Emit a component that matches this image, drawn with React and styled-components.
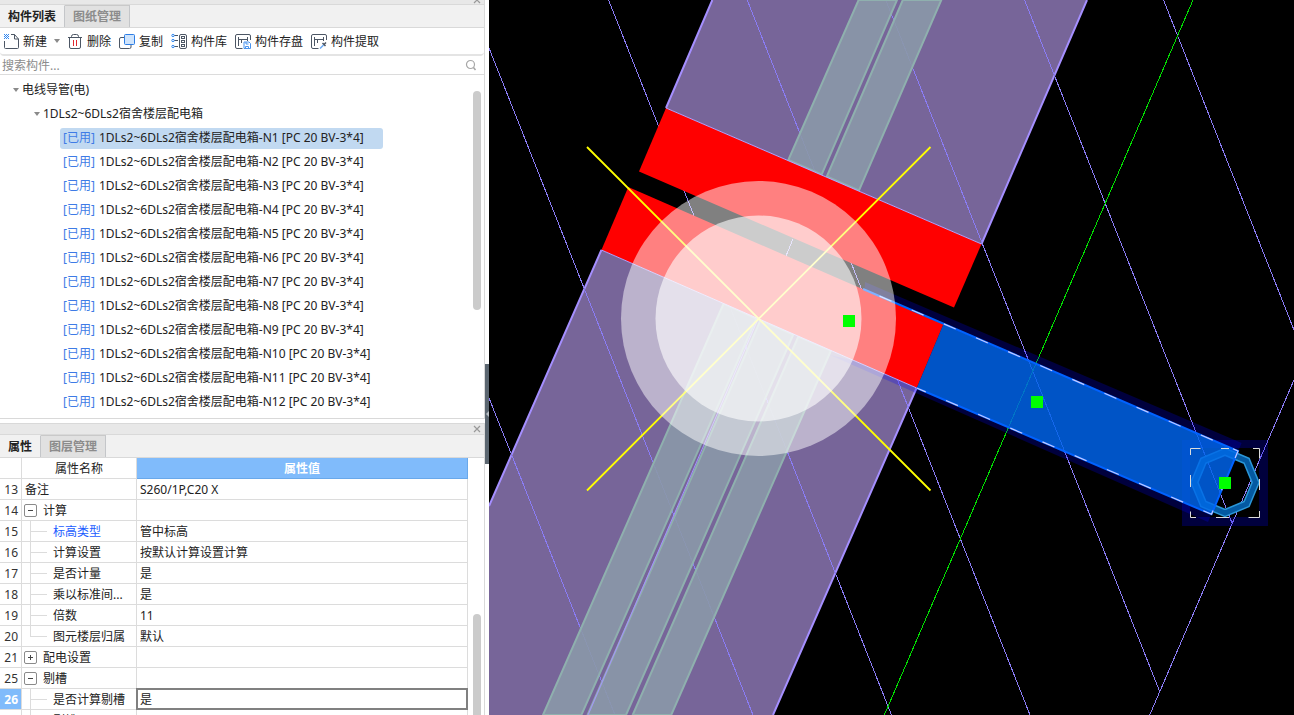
import React, { useState } from 'react';
import styled, { createGlobalStyle } from 'styled-components';

const GlobalStyle = createGlobalStyle`
  * {
    box-sizing: border-box;
  }

  body {
    margin: 0;
    overflow: hidden;
    background: #fff;
    color: #222;
    font-family: 'Noto Sans', 'Noto Sans CJK SC', sans-serif;
    font-size: 12px;
    line-height: 20px;
  }

  button,
  input {
    margin: 0;
    padding: 0;
    border: none;
    background: none;
    color: inherit;
    font: inherit;
  }
`;

const Workspace = styled.div`
  display: flex;
  height: 100vh;
`;

const Sidebar = styled.aside`
  display: flex;
  flex-direction: column;
  flex: 0 0 485px;
  min-width: 0;
  overflow: hidden;
`;

const Splitter = styled.div`
  flex: 0 0 4px;
  background: #fff;
`;

const CollapseButton = styled.button`
  display: flex;
  justify-content: flex-end;
  align-items: center;
  width: 4px;
  height: 100px;
  margin-top: 364px;
  background: #5b6670;
`;

const Panel = styled.section`
  display: flex;
  flex-direction: column;
  flex: ${(p) => (p.$grow ? '1' : 'none')};
  min-height: 0;
  margin-bottom: ${(p) => (p.$grow ? '0' : '4px')};
  border-right: 1px solid #d9d9d9;
  border-bottom: ${(p) => (p.$grow ? 'none' : '1px solid #d9d9d9')};
`;

const TitleBar = styled.div`
  display: flex;
  flex: none;
  justify-content: flex-end;
  align-items: ${(p) => (p.$clipped ? 'flex-end' : 'center')};
  height: ${(p) => (p.$clipped ? '5px' : '12px')};
  padding-right: 3px;
  overflow: hidden;
  border-top: ${(p) => (p.$clipped ? 'none' : '1px solid #d9d9d9')};
  border-bottom: 1px solid #d9d9d9;
  background: #e8e8e8;
`;

const CloseButton = styled.button`
  display: flex;
  width: 8px;
  height: 8px;
`;

const Tabs = styled.div`
  display: flex;
  flex: none;
  height: 23px;
  border-bottom: 1px solid #d9d9d9;
  background: #f1f1f1;
`;

const Tab = styled.button`
  height: 22px;
  padding: 0 8px;
  border-right: 1px solid #c4c6c9;
  border-top: 1px solid ${(p) => (p.$active ? '#f1f1f1' : '#c9c9c9')};
  background: ${(p) => (p.$active ? '#f1f1f1' : '#e1e1e1')};
  color: ${(p) => (p.$active ? '#222' : '#8c8c8c')};
  font-weight: 700;
`;

const Toolbar = styled.div`
  display: flex;
  flex: none;
  align-items: center;
  gap: 8px;
  height: 28px;
  padding-left: 3px;
  border-bottom: 2px solid #e4e4e4;
  border-radius: 0 0 4px 4px;
`;

const ToolGroup = styled.div`
  display: flex;
`;

const ToolButton = styled.button`
  display: flex;
  align-items: center;
  gap: 4px;
`;

const ToolLabel = styled.span`
  padding-top: 2px;
`;

const MenuButton = styled.button`
  display: flex;
  justify-content: flex-end;
  align-items: center;
  width: 13px;
  margin-right: -1px;
`;

const SearchBar = styled.label`
  display: flex;
  flex: none;
  align-items: center;
  height: 19px;
  padding: 0 7px 0 2px;
  border-bottom: 1px solid #dcdcdc;
`;

const SearchInput = styled.input`
  flex: 1;
  padding-top: 2px;
  outline: none;

  &::placeholder {
    color: #8c8c8c;
    opacity: 1;
  }
`;

const Scroller = styled.div`
  display: flex;
  flex: ${(p) => (p.$grow ? '1' : 'none')};
  min-height: 0;
`;

const ScrollTrack = styled.div`
  flex: none;
  width: 11px;
  padding-top: ${(p) => p.$offset}px;
`;

const ScrollThumb = styled.div`
  width: 8px;
  height: ${(p) => p.$size}px;
  border-radius: 4px;
  background: #cbcbcb;
`;

const Tree = styled.ul`
  flex: 1;
  margin: 0;
  padding: 3px 0 4px;
  list-style: none;
`;

const TreeRow = styled.li`
  display: flex;
  align-items: center;
  gap: 3px;
  height: 24px;
  padding-left: ${(p) => p.$indent}px;
`;

const TreeItem = styled.button`
  display: flex;
  align-items: center;
  gap: 4px;
  height: 21px;
  padding: 0 19px 0 3px;
  border-radius: 3px;
  background: ${(p) => (p.$selected ? '#c1d9f1' : 'transparent')};
  white-space: pre;
`;

const UsedMark = styled.span`
  color: #3e7be6;
`;

const Table = styled.table`
  width: 468px;
  border-collapse: separate;
  border-spacing: 0;
  table-layout: fixed;

  col:nth-child(1) {
    width: 22px;
  }

  col:nth-child(2) {
    width: 115px;
  }

  tr {
    height: 21px;
  }
`;

const TableArea = styled.div`
  flex: 1;
  overflow: hidden;
`;

const HeadCell = styled.th`
  height: 21px;
  padding: 1px 0 0;
  line-height: 19px;
  border-right: 1px solid ${(p) => (p.$active ? '#69a8ea' : '#dcdcdc')};
  border-bottom: 1px solid ${(p) => (p.$active ? '#69a8ea' : '#dcdcdc')};
  background: ${(p) => (p.$active ? '#80bbfb' : '#fff')};
  color: ${(p) => (p.$active ? '#fff' : '#222')};
  font-weight: ${(p) => (p.$active ? 700 : 400)};
`;

const NumberCell = styled.th`
  height: 21px;
  padding: 1px 3px 0 0;
  line-height: 19px;
  border-right: 1px solid #dcdcdc;
  border-bottom: 1px solid #dcdcdc;
  background: ${(p) => (p.$active ? '#80bbfb' : '#fff')};
  color: ${(p) => (p.$active ? '#fff' : '#333')};
  font-weight: ${(p) => (p.$active ? 700 : 400)};
  text-align: right;
`;

const Cell = styled.td`
  height: 21px;
  padding: 0;
  border-right: 1px solid #dcdcdc;
  border-bottom: 1px solid #dcdcdc;
`;

const NameLine = styled.div`
  display: flex;
  align-items: center;
  gap: 6px;
  height: 20px;
  padding-left: ${(p) => p.$indent}px;
  color: ${(p) => (p.$link ? '#1a5cff' : 'inherit')};
  white-space: nowrap;
`;

const NameText = styled.span`
  padding-top: 2px;
`;

const Guide = styled.span`
  flex: none;
  width: 17px;
  height: 20px;

  &::before,
  &::after {
    content: '';
    display: block;
    height: 10px;
    border-left: 1px solid #dcdcdc;
  }

  &::before {
    border-bottom: 1px solid #dcdcdc;
  }

  &::after {
    border-left-color: ${(p) => (p.$last ? 'transparent' : '#dcdcdc')};
  }
`;

const Toggle = styled.button`
  display: flex;
  flex: none;
  justify-content: center;
  align-items: center;
  width: 13px;
  height: 13px;
  border: 1px solid #8a8a8a;
  border-radius: 2px;
`;

const ValueInput = styled.input`
  display: block;
  width: 100%;
  height: 20px;
  padding: 2px 3px 0;
  outline: ${(p) => (p.$active ? '2px solid #808080' : 'none')};
  outline-offset: -1px;
  text-overflow: ellipsis;
`;

const Viewport = styled.main`
  flex: 1;
  min-width: 0;
  background: #000;
`;

const Drawing = styled.svg`
  display: block;
  width: 100%;
  height: 100%;
`;

const Caret = () => (
  <svg width="6" height="4" viewBox="0 0 6 4" aria-hidden="true">
    <path d="M0 0h6L3 4z" fill="#8a8a8a" />
  </svg>
);

const CloseIcon = () => (
  <svg width="8" height="8" viewBox="0 0 8 8" aria-hidden="true">
    <path d="M1 1l6 6M7 1L1 7" stroke="#999" strokeWidth="1.2" />
  </svg>
);

const Icon = ({ children }) => (
  <svg
    width="16"
    height="16"
    viewBox="0 0 16 16"
    fill="none"
    stroke="#4c5664"
    aria-hidden="true"
  >
    {children}
  </svg>
);

const NewIcon = () => (
  <Icon>
    <path d="M1.5 8v6.500a1 1 0 0 0 1 1h12a1 1 0 0 0 1-1V6L11.500 1.500H8M11.500 1.500V6h4" />
    <path
      d="M1 1h1v1h1v1H2v1H1V3h1V2H1zM3 1h1v1H3zM5 1h1v1H5zM4 2h1v1H4zM3 3h1v1H3zM5 3h1v1H5zM2 4h1v1H2zM4 4h1v1H4zM1 5h1v1H1zM3 5h1v1H3zM5 5h1v1H5z"
      fill="#2f86f0"
      stroke="none"
    />
  </Icon>
);

const DeleteIcon = () => (
  <Icon>
    <path d="M1 4.500h14M4.500 4.500v-1a2 2 0 0 1 2-2h3a2 2 0 0 1 2 2v1M2.500 4.500V14A1.500 1.500 0 0 0 4 15.500h8a1.500 1.500 0 0 0 1.500-1.500V4.500" />
    <path d="M6.500 7v6M9.500 7v6" stroke="#e02830" />
  </Icon>
);

const CopyIcon = () => (
  <Icon>
    <path d="M5 4.500H2A1.500 1.500 0 0 0 .5 6v8A1.500 1.500 0 0 0 2 15.500h8.500A1.500 1.500 0 0 0 12 14v-2.500" />
    <rect x="5.500" y="1.500" width="10" height="10" rx="1" fill="#cfe4fc" stroke="#2d7de4" />
  </Icon>
);

const LibraryIcon = () => (
  <Icon>
    <path d="M3 2.500h4M3 7.500h4M3 13.500h4" />
    <g stroke="#2d86f0" fill="#fff">
      <circle cx="2" cy="2.500" r="1.200" />
      <circle cx="2" cy="7.500" r="1.200" />
      <circle cx="2" cy="13.500" r="1.200" />
    </g>
    <rect x="8.500" y="1.500" width="7" height="14" rx="1.500" />
    <rect x="10.500" y="3.500" width="3" height="2" />
    <rect x="10.500" y="7.500" width="3" height="2" />
    <rect x="10.500" y="11.500" width="3" height="2" />
  </Icon>
);

const FrameStrokes = () => (
  <path d="M7.500 15.500H2A1.500 1.500 0 0 1 .5 14V3A1.500 1.500 0 0 1 2 1.500h12A1.500 1.500 0 0 1 15.500 3v4M3.500 13V4M3.500 6.500h8.500M12.500 4v4M6.500 10V6.500" />
);

const StoreIcon = () => (
  <Icon>
    <FrameStrokes />
    <path d="M9 9h5l1.500 1.500v5H9z" fill="#fff" stroke="#4a94ee" />
    <path d="M11 9v2h2.500M10.500 15v-1.500h3V15" stroke="#4a94ee" />
  </Icon>
);

const ExtractIcon = () => (
  <Icon>
    <FrameStrokes />
    <path d="M9 15.500l3.500-3.500" stroke="#6aa9f4" strokeWidth="1.500" />
    <path d="M11.500 10l3 3M12.500 12l2.500-2.500" strokeWidth="1.500" />
  </Icon>
);

const SearchIcon = () => (
  <svg width="12" height="12" viewBox="0 0 12 12" fill="none" stroke="#a6a6a6" aria-hidden="true">
    <circle cx="5.500" cy="5.500" r="4" strokeWidth="1.200" />
    <path d="M8.500 8.500l2 2.500" strokeWidth="1.500" />
  </svg>
);

const tools = [
  { label: '新建', icon: NewIcon, menu: true },
  { label: '删除', icon: DeleteIcon },
  { label: '复制', icon: CopyIcon },
  { label: '构件库', icon: LibraryIcon },
  { label: '构件存盘', icon: StoreIcon },
  { label: '构件提取', icon: ExtractIcon },
];

const circuits = Array.from({ length: 12 }, (_, i) => `N${i + 1}`);

const properties = [
  { id: 13, name: '备注', value: 'S260/1P,C20 X' },
  { id: 14, name: '计算', group: true, open: true },
  { id: 15, name: '标高类型', value: '管中标高', child: true, link: true },
  { id: 16, name: '计算设置', value: '按默认计算设置计算', child: true },
  { id: 17, name: '是否计量', value: '是', child: true },
  { id: 18, name: '乘以标准间...', value: '是', child: true },
  { id: 19, name: '倍数', value: '11', child: true },
  { id: 20, name: '图元楼层归属', value: '默认', child: true, last: true },
  { id: 21, name: '配电设置', group: true },
  { id: 25, name: '剔槽', group: true, open: true },
  { id: 26, name: '是否计算剔槽', value: '是', child: true },
  { id: 27, name: '剔槽', value: '', child: true, last: true },
];

const ComponentPanel = () => {
  const [selected, setSelected] = useState('N1');

  return (
    <Panel>
      <TitleBar $clipped>
        <CloseButton aria-label="关闭">
          <CloseIcon />
        </CloseButton>
      </TitleBar>
      <Tabs>
        <Tab $active>构件列表</Tab>
        <Tab>图纸管理</Tab>
      </Tabs>
      <Toolbar>
        {tools.map(({ label, icon: ToolIcon, menu }) => (
          <ToolGroup key={label}>
            <ToolButton>
              <ToolIcon />
              <ToolLabel>{label}</ToolLabel>
            </ToolButton>
            {menu && (
              <MenuButton aria-label="更多">
                <Caret />
              </MenuButton>
            )}
          </ToolGroup>
        ))}
      </Toolbar>
      <SearchBar>
        <SearchInput placeholder="搜索构件..." aria-label="搜索构件" />
        <SearchIcon />
      </SearchBar>
      <Scroller>
        <Tree>
          <TreeRow $indent={13}>
            <Caret />
            电线导管(电)
          </TreeRow>
          <TreeRow $indent={34}>
            <Caret />
            1DLs2~6DLs2宿舍楼层配电箱
          </TreeRow>
          {circuits.map((name) => (
            <TreeRow key={name} $indent={60}>
              <TreeItem $selected={name === selected} onClick={() => setSelected(name)}>
                <UsedMark>[已用]</UsedMark>
                {`1DLs2~6DLs2宿舍楼层配电箱-${name} [PC 20 BV-3*4]`}
              </TreeItem>
            </TreeRow>
          ))}
        </Tree>
        <ScrollTrack $offset={16}>
          <ScrollThumb $size={219} />
        </ScrollTrack>
      </Scroller>
    </Panel>
  );
};

const PropertyPanel = () => {
  const [active, setActive] = useState(26);

  return (
    <Panel $grow>
      <TitleBar>
        <CloseButton aria-label="关闭">
          <CloseIcon />
        </CloseButton>
      </TitleBar>
      <Tabs>
        <Tab $active>属性</Tab>
        <Tab>图层管理</Tab>
      </Tabs>
      <Scroller $grow>
        <TableArea>
          <Table>
            <colgroup>
              <col />
              <col />
              <col />
            </colgroup>
            <thead>
              <tr>
                <HeadCell aria-label="序号" />
                <HeadCell scope="col">属性名称</HeadCell>
                <HeadCell scope="col" $active>
                  属性值
                </HeadCell>
              </tr>
            </thead>
            <tbody>
              {properties.map((p) => (
                <tr key={p.id}>
                  <NumberCell scope="row" $active={p.id === active}>
                    {p.id}
                  </NumberCell>
                  <Cell>
                    <NameLine $indent={p.child ? 8 : p.group ? 2 : 3} $link={p.link}>
                      {p.child && <Guide $last={p.last} />}
                      {p.group && (
                        <Toggle aria-label={p.name}>
                          <svg width="7" height="7" viewBox="0 0 7 7" stroke="#444">
                            <path d={p.open ? 'M1 3.5h5' : 'M1 3.5h5M3.5 1v5'} />
                          </svg>
                        </Toggle>
                      )}
                      <NameText>{p.name}</NameText>
                    </NameLine>
                  </Cell>
                  <Cell>
                    {!p.group && (
                      <ValueInput
                        defaultValue={p.value}
                        aria-label={p.name}
                        $active={p.id === active}
                        onFocus={() => setActive(p.id)}
                      />
                    )}
                  </Cell>
                </tr>
              ))}
            </tbody>
          </Table>
        </TableArea>
        <ScrollTrack $offset={156}>
          <ScrollThumb $size={110} />
        </ScrollTrack>
      </Scroller>
    </Panel>
  );
};

const gridLines = [
  [489, 398, 615, 715],
  [489, 48, 753, 715],
  [608.6, 0, 891.5, 715],
  [747.2, 0, 1030, 715],
  [885.8, 0, 1159.5, 691],
  [1024.5, 0, 1232, 523],
  [1163.5, 0, 1294, 330],
  [1294, 380, 1149.7, 715],
  [793, 239, 786, 256],
];

const ducts = [
  '858.6,0 897,0 821.7,174.5 788.3,160',
  '902.8,0 941.3,0 859,190.500 826.8,176.500',
  '543,715 723.6,303.500 756.500,318.500 581.4,715',
  '587.6,715 760.500,320 793.3,334.500 626,715',
  '632.7,715 798.3,336.500 831,350.500 671.2,715',
];

const handles = [
  [843, 315],
  [1031, 396],
  [1219, 477],
];

const riserPath = 'M1225 451.800l21.600 9 9 21.600-9 21.600-21.600 9-21.600-9-9-21.600 9-21.600z';

const PlanView = () => (
  <Viewport>
    <Drawing viewBox="489 0 805 715" preserveAspectRatio="xMinYMin slice" role="img" aria-label="平面图">
      <path d="M712.3 0H1087L981.5 244 666 108z" fill="#776599" />
      <path d="M601.4 250L916.6 388 773 715H489V506z" fill="#776599" />
      <g stroke="#a58fff" strokeWidth="2">
        <path d="M712.3 0L666 108M1087 0L981.5 244M601.4 250L489 506M916.6 388L773 715" />
      </g>
      <g stroke="#8a7cf4" shapeRendering="crispEdges">
        {gridLines.map(([x1, y1, x2, y2]) => (
          <line key={`${x1}-${y1}`} x1={x1} y1={y1} x2={x2} y2={y2} />
        ))}
      </g>
      <g fill="#8a98a9" fillOpacity="0.9" stroke="#8fb0ae" strokeWidth="2">
        {ducts.map((points) => (
          <polygon key={points} points={points} />
        ))}
      </g>
      <path d="M758 319L588 715" stroke="#a58fff" />
      <path d="M1193 0L884.300 715" stroke="#00e000" shapeRendering="crispEdges" />

      {/* glow around the selected pipe */}
      <path d="M865 282L1241.6 443 1208 522 830 355 860 362z" fill="#00f" fillOpacity="0.24" />
      <path d="M1182 440h86v86h-86zM1190 448v69h69v-69z" fill="#00f" fillOpacity="0.24" fillRule="evenodd" />

      <path d="M666 108L981.5 244 954 307.500 639 171.500z" fill="#f00" />
      <path d="M628.3 187L943.4 324.300 916.7 388 601.4 250z" fill="#f00" />
      <path d="M666 108L981.5 244M601.4 250L916.7 388" stroke="#b3a2ff" />

      <g fill="none">
        <path d={riserPath} stroke="#2a96d8" strokeWidth="8" />
        <path d={riserPath} stroke="#0459a2" strokeWidth="5" />
      </g>
      <path d="M943.4 324.300L1238 451 1211.500 514.300 916.7 388z" fill="#0069e8" fillOpacity="0.8" />
      <path d="M863 289L1238 451 1211.500 514.300 916.7 388" fill="none" stroke="#0062ff" strokeWidth="2" />
      <path
        d="M863 289L1238 451 1211.500 514.300 916.7 388"
        fill="none"
        stroke="#c4ccff"
        strokeWidth="1.200"
        strokeDasharray="13 22"
        strokeDashoffset="-18"
      />
      <path
        d="M1190.500 455v-6.500h10M1221 448.500h8M1253 448.500h6.500v10M1259.500 479v11M1259.500 511v6.500h-11M1229 517.500h-13M1196 517.500h-5.500v-6M1190.500 487v-12"
        fill="none"
        stroke="#ddd"
      />

      <path d="M587 147L930.500 490.500M930.500 147L587 490.500" stroke="#ff0" strokeWidth="1.800" />
      <circle cx="758.5" cy="318.5" r="137.500" fill="#fff" fillOpacity="0.5" />
      <circle cx="758.5" cy="318.5" r="103" fill="#fff" fillOpacity="0.6" />
      <g fill="#0f0">
        {handles.map(([x, y]) => (
          <rect key={x} x={x} y={y} width="12" height="12" />
        ))}
      </g>
    </Drawing>
  </Viewport>
);

const App = () => {
  return (
    <>
      <GlobalStyle />
      <Workspace>
        <Sidebar>
          <ComponentPanel />
          <PropertyPanel />
        </Sidebar>
        <Splitter>
          <CollapseButton aria-label="收起">
            <svg width="3" height="6" viewBox="0 0 3 6" aria-hidden="true">
              <path d="M3 0v6L0 3z" fill="#b8bec4" />
            </svg>
          </CollapseButton>
        </Splitter>
        <PlanView />
      </Workspace>
    </>
  );
};

export default App;
